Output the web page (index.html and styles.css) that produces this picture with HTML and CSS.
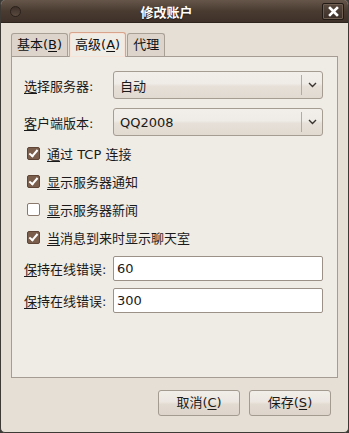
FILE: index.html
```html
<!DOCTYPE html>
<html>
  <head>
    <title>修改账户</title>
    <link rel="stylesheet" href="styles.css">
  </head>
  <body>
    <div class="window">
      <div class="titlebar">
        <span class="menu-dot"></span>
        <span class="title">修改账户</span>
        <span class="close-btn">
          <svg width="11" height="11" viewBox="0 0 11 11"><path d="M2 2 L9 9 M9 2 L2 9" stroke="#fff" stroke-width="2.6" stroke-linecap="square"/></svg>
        </span>
      </div>

      <div class="dialog">
        <div class="tabs">
          <div class="tab">基本(<u>B</u>)</div>
          <div class="tab active">高级(<u>A</u>)</div>
          <div class="tab">代理</div>
        </div>

        <div class="panel">
          <div class="row">
            <label class="label"><u>选</u>择服务器:</label>
            <div class="combo">
              <span class="combo-text">自动</span>
              <span class="combo-arrow">
                <svg width="9" height="6" viewBox="0 0 9 6"><path d="M1 1 L4.5 4.5 L8 1" fill="none" stroke="#3a3530" stroke-width="1.4"/></svg>
              </span>
            </div>
          </div>
          <div class="row">
            <label class="label"><u>客</u>户端版本:</label>
            <div class="combo">
              <span class="combo-text">QQ2008</span>
              <span class="combo-arrow">
                <svg width="9" height="6" viewBox="0 0 9 6"><path d="M1 1 L4.5 4.5 L8 1" fill="none" stroke="#3a3530" stroke-width="1.4"/></svg>
              </span>
            </div>
          </div>

          <div class="checks">
            <div class="check-row"><span class="box checked"></span><span><u>通</u>过 TCP 连接</span></div>
            <div class="check-row"><span class="box checked"></span><span><u>显</u>示服务器通知</span></div>
            <div class="check-row"><span class="box"></span><span><u>显</u>示服务器新闻</span></div>
            <div class="check-row"><span class="box checked"></span><span><u>当</u>消息到来时显示聊天室</span></div>
          </div>

          <div class="entries">
            <div class="row">
              <label class="label"><u>保</u>持在线错误:</label>
              <div class="entry">60</div>
            </div>
            <div class="row">
              <label class="label"><u>保</u>持在线错误:</label>
              <div class="entry">300</div>
            </div>
          </div>
        </div>

        <div class="buttons">
          <div class="button">取消(<u>C</u>)</div>
          <div class="button">保存(<u>S</u>)</div>
        </div>
      </div>
    </div>
  </body>
</html>
```
FILE: styles.css
```css
html, body {
  margin: 0;
  padding: 0;
  background: #3c3b37;
}

body {
  font-family: "DejaVu Sans", "Noto Sans CJK SC", sans-serif;
  font-size: 13px;
  color: #1a1a1a;
}

u {
  text-decoration-thickness: 1px;
  text-underline-offset: 2px;
}

.window {
  width: 349px;
  height: 433px;
  box-sizing: border-box;
  background: #e6dfd6;
  border: 1px solid #3d3935;
  border-top: none;
  border-radius: 5px;
  overflow: hidden;
  display: flex;
  flex-direction: column;
}

.titlebar {
  height: 22px;
  flex: none;
  display: flex;
  align-items: center;
  background: linear-gradient(#66564a, #4a3b31 50%, #3e3129);
  border-bottom: 1px solid #2e241e;
  margin: 0 -1px;
}

.menu-dot {
  width: 9px;
  height: 9px;
  border-radius: 50%;
  border: 1px solid #2a211b;
  background: linear-gradient(#3d3029, #5a4a3e);
  margin-left: 10px;
}

.title {
  flex: 1;
  text-align: center;
  color: #fff;
  font-weight: bold;
  font-size: 13px;
  text-shadow: 0 1px 1px #1e1612;
  margin-left: -10px;
}

.close-btn {
  width: 20px;
  height: 15px;
  margin-right: 5px;
  border: 1px solid #221a15;
  border-radius: 2px;
  background: linear-gradient(#5a4a3f, #3b2f28);
  box-shadow: inset 0 0 0 1px #6e5e52;
  display: flex;
  align-items: center;
  justify-content: center;
}

.dialog {
  flex: 1;
  padding: 9px 10px 0 10px;
  display: flex;
  flex-direction: column;
}

.tabs {
  display: flex;
  align-items: flex-end;
  height: 24px;
}

.tab {
  height: 22px;
  line-height: 22px;
  padding: 0 5px;
  background: #ddd5cb;
  border: 1px solid #a9a095;
  border-bottom: none;
  border-radius: 3px 3px 0 0;
  margin-right: 1px;
  color: #111;
}

.tab.active {
  height: 23px;
  line-height: 23px;
  background: #efebe5;
  border-color: #d8a58c;
  box-shadow: inset 0 0 0 1px #f6e2d6;
  position: relative;
  z-index: 1;
  margin-bottom: -1px;
  padding-bottom: 1px;
}

.panel {
  width: 327px;
  height: 322px;
  box-sizing: border-box;
  background: #efebe5;
  border: 1px solid #a59d93;
  padding: 14px 14px 0 12px;
  display: flex;
  flex-direction: column;
}

.row {
  display: flex;
  align-items: center;
  margin-bottom: 9px;
}

.label {
  width: 89px;
  flex: none;
}

.combo {
  flex: 1;
  height: 28px;
  box-sizing: border-box;
  border: 1px solid #a59c92;
  border-radius: 3px;
  background: linear-gradient(#f2efea, #efebe6 45%, #e6e0d8 55%, #e1dad1);
  display: flex;
  align-items: center;
}

.combo-text {
  flex: 1;
  padding-left: 6px;
}

.combo-arrow {
  width: 20px;
  height: 20px;
  border-left: 1px solid #b3aaa0;
  display: flex;
  align-items: center;
  justify-content: center;
}

.checks {
  display: flex;
  flex-direction: column;
  margin-top: -6px;
  padding-left: 3px;
  margin-bottom: 5px;
}

.check-row {
  display: flex;
  align-items: center;
  height: 28px;
}

.box {
  width: 11px;
  height: 11px;
  border: 1px solid #8a7a6e;
  border-radius: 2px;
  background: #fff;
  margin-right: 7px;
  position: relative;
}

.box.checked {
  background: #7b5f4c;
  border-color: #5e4536;
}

.box.checked::after {
  content: "";
  position: absolute;
  left: 3px;
  top: 0;
  width: 3px;
  height: 7px;
  border: solid #fff;
  border-width: 0 2px 2px 0;
  transform: rotate(40deg);
}

.entries .row {
  margin-bottom: 7px;
}

.entry {
  flex: 1;
  height: 25px;
  line-height: 23px;
  box-sizing: border-box;
  border: 1px solid #9b9187;
  border-radius: 2px;
  background: #fff;
  padding-left: 3px;
}

.buttons {
  display: flex;
  justify-content: flex-end;
  padding-top: 12px;
  padding-right: 7px;
}

.button {
  width: 82px;
  height: 26px;
  line-height: 24px;
  box-sizing: border-box;
  text-align: center;
  border: 1px solid #a39a90;
  border-radius: 3px;
  background: linear-gradient(#f1ede8, #ece7e1 45%, #e2dbd2 55%, #ddd5cb);
  margin-left: 9px;
}
```
